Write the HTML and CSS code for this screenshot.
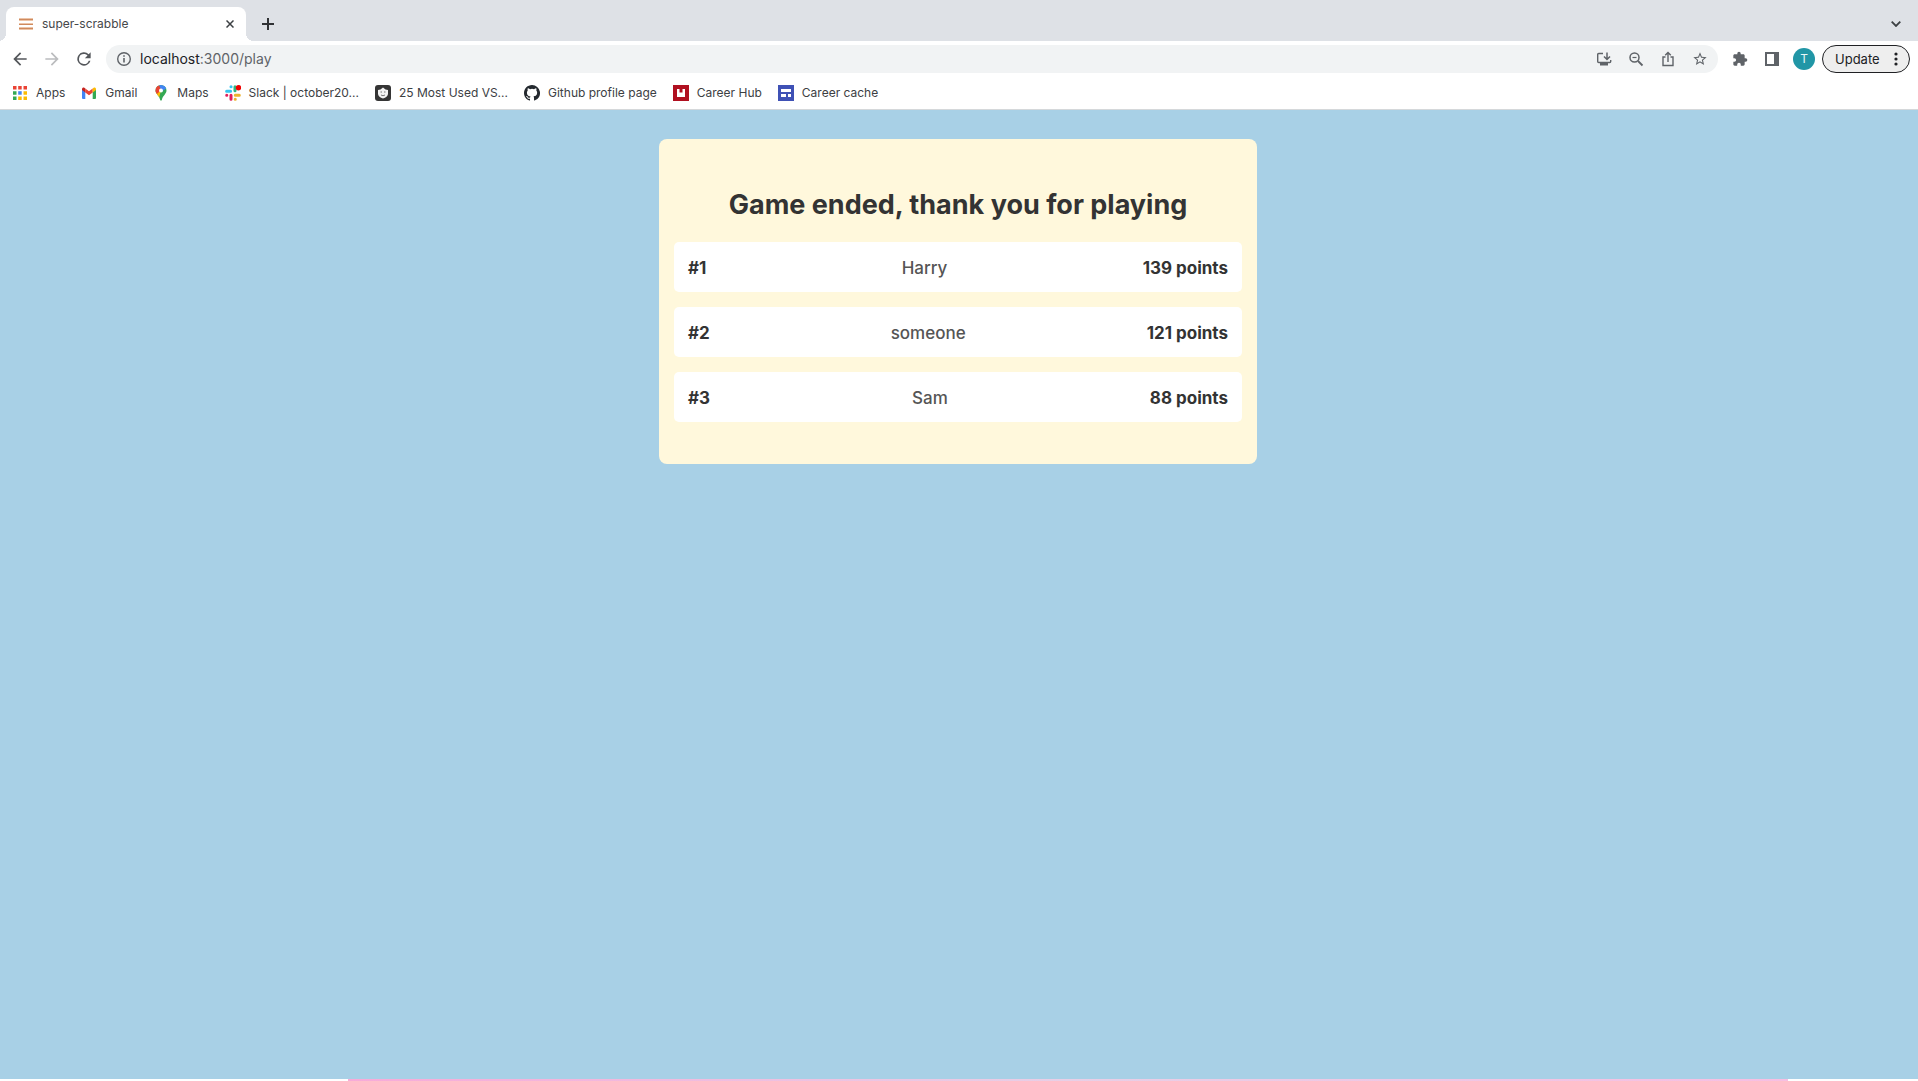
FILE: index.html
```html
<!DOCTYPE html>
<html lang="en">
<head>
<meta charset="utf-8">
<title>super-scrabble</title>
<link rel="stylesheet" href="styles.css">
</head>
<body>
<div class="browser">
  <header class="chrome">
    <div class="tabstrip">
      <div class="tab">
        <svg class="favicon" viewBox="0 0 14 14"><path fill="#ecc4a8" d="M0 1h14v3H0zM0 6h14v2H0zM0 10h14v3H0z"/><path stroke="#cf8a5e" d="M0 2.500h14M0 7.500h14M0 11.500h14"/></svg>
        <span class="tab-title">super-scrabble</span>
        <button class="icon-btn close" aria-label="Close tab"><svg width="8" height="8" viewBox="0 0 8 8"><path d="M.5.5l7 7m0-7l-7 7" stroke="#3c4043" stroke-width="1.500"/></svg></button>
      </div>
      <button class="icon-btn new-tab" aria-label="New tab"><svg width="12" height="12" viewBox="0 0 12 12"><path d="M6 0v12M0 6h12" stroke="#303235" stroke-width="2"/></svg></button>
      <button class="icon-btn tab-search" aria-label="Search tabs"><svg width="10" height="6" viewBox="0 0 10 6"><path d="M.7.7L5 5 9.300.7" fill="none" stroke="#3c4043" stroke-width="1.800"/></svg></button>
    </div>
    <div class="toolbar">
      <nav class="nav">
        <button class="icon-btn" aria-label="Back"><svg width="20" height="20" viewBox="0 0 24 24"><path fill="#54575b" d="M20 11H7.830l5.590-5.590L12 4l-8 8 8 8 1.410-1.410L7.830 13H20z"/></svg></button>
        <button class="icon-btn" aria-label="Forward"><svg width="20" height="20" viewBox="0 0 24 24"><path fill="#bbbcbe" d="M4 11h12.170l-5.590-5.590L12 4l8 8-8 8-1.410-1.410L16.170 13H4z"/></svg></button>
        <button class="icon-btn" aria-label="Reload"><svg width="20" height="20" viewBox="0 0 24 24"><path fill="#54575b" d="M17.650 6.350A8 8 0 1 0 19.730 14h-2.080A6 6 0 1 1 12 6c1.660 0 3.140.69 4.220 1.780L13 11h7V4z"/></svg></button>
      </nav>
      <div class="omnibox">
        <svg width="16" height="16" viewBox="0 0 16 16"><circle cx="8" cy="8" r="6.300" fill="none" stroke="#5f6368" stroke-width="1.400"/><path d="M8 7v4.500M8 4.300v1.500" stroke="#5f6368" stroke-width="1.600"/></svg>
        <div class="url"><span class="host">localhost</span>:3000/play</div>
        <div class="actions">
          <button class="icon-btn" aria-label="Install app"><svg width="16" height="16" viewBox="0 0 16 16"><path d="M7 2.500H2.700Q1.700 2.500 1.700 3.500v7q0 1 1 1h11q1 0 1-1V9" fill="none" stroke="#5f6368" stroke-width="1.400"/><path d="M4 12h8v2.500H4z" fill="#5f6368"/><path d="M11 1.500V8M8 5.500l3 3 3-3" fill="none" stroke="#5f6368" stroke-width="1.500"/></svg></button>
          <button class="icon-btn" aria-label="Zoom"><svg width="16" height="16" viewBox="0 0 16 16" fill="none" stroke="#5f6368"><circle cx="6.500" cy="6.500" r="4.500" stroke-width="1.500"/><path d="M10 10l4.500 4.500" stroke-width="1.800"/><path d="M4.500 6.500h4" stroke-width="1.200"/></svg></button>
          <button class="icon-btn" aria-label="Share"><svg width="16" height="16" viewBox="0 0 16 16" fill="none" stroke="#5f6368" stroke-width="1.400"><path d="M5.500 6H3v8.500h10V6h-2.500M8 11V1.800M5.200 4.300L8 1.500l2.800 2.800"/></svg></button>
          <button class="icon-btn" aria-label="Bookmark this tab"><svg width="16" height="16" viewBox="0 0 24 24"><path fill="#5f6368" d="M22 9.240l-7.190-.62L12 2 9.190 8.630 2 9.240l5.460 4.730L5.820 21 12 17.270 18.180 21l-1.630-7.030zM12 15.400l-3.760 2.270 1-4.280-3.320-2.880 4.380-.38L12 6.100l1.710 4.040 4.380.38-3.320 2.880 1 4.280z"/></svg></button>
        </div>
      </div>
      <div class="tools">
        <button class="icon-btn" aria-label="Extensions"><svg width="16" height="16" viewBox="0 0 24 24"><path fill="#5f6368" d="M20.500 11H19V7c0-1.100-.9-2-2-2h-4V3.500a2.500 2.500 0 0 0-5 0V5H4c-1.100 0-2 .9-2 2v3.800h1.500a2.700 2.700 0 0 1 0 5.400H2V20c0 1.100.9 2 2 2h3.800v-1.500a2.700 2.700 0 0 1 5.400 0V22H17c1.100 0 2-.9 2-2v-4h1.500a2.500 2.500 0 0 0 0-5z"/></svg></button>
        <button class="icon-btn" aria-label="Side panel"><svg width="14" height="14" viewBox="0 0 14 14"><path fill="#5f6368" fill-rule="evenodd" d="M0 0h14v14H0zM2 2v10h7V2z"/></svg></button>
        <button class="avatar" aria-label="Profile">T</button>
      </div>
      <button class="update">Update<svg width="4" height="14" viewBox="0 0 4 14" fill="#202124"><circle cx="2" cy="2" r="1.600"/><circle cx="2" cy="7" r="1.600"/><circle cx="2" cy="12" r="1.600"/></svg></button>
    </div>
    <nav class="bookmarks" aria-label="Bookmarks">
      <a href="#"><svg width="16" height="16" viewBox="0 0 16 16"><path fill="#ea4335" d="M1 1h3.500v3.500H1zM6.200 1h3.500v3.500H6.200zM11.500 1H15v3.500h-3.500z"/><path fill="#34a853" d="M1 6.200h3.500v3.500H1zM1 11.500h3.500V15H1z"/><path fill="#4285f4" d="M6.200 6.200h3.500v3.500H6.200z"/><path fill="#fbbc04" d="M11.500 6.200H15v3.500h-3.500zM6.200 11.500h3.500V15H6.200zM11.500 11.500H15V15h-3.500z"/></svg>Apps</a>
      <a href="#"><svg width="16" height="16" viewBox="0 0 16 16"><path fill="#4285f4" d="M1 4l3.300 2.500V14H2q-1 0-1-1z"/><path fill="#34a853" d="M15 4l-3.300 2.500V14H14q1 0 1-1z"/><path fill="#ea4335" d="M4.300 3.500L8 6.300l3.700-2.800v4L8 10.300 4.300 7.500z"/><path fill="#c5221f" d="M1 4.200Q1 2 3 2.600l1.300.9v4L1 5z"/><path fill="#fbbc04" d="M15 4.200Q15 2 13 2.600l-1.300.9v4L15 5z"/></svg>Gmail</a>
      <a href="#"><svg width="16" height="16" viewBox="0 0 16 16"><clipPath id="pin"><path d="M8 0a5.500 5.500 0 0 1 5.500 5.500C13.500 9 9.700 10.500 8.800 15q-.8 1.300-1.600 0C6.300 10.500 2.500 9 2.500 5.500A5.500 5.500 0 0 1 8 0z"/></clipPath><g clip-path="url(#pin)"><path fill="#34a853" d="M0 0h16v16H0z"/><path fill="#fbbc04" d="M2 7L8 5.500 6 13z"/><path fill="#4285f4" d="M6 0h8v3L8 7z"/><path fill="#ea4335" d="M0 0h6l2 5-4 4-3-2z"/></g><circle cx="8" cy="5.500" r="2" fill="#fff"/></svg>Maps</a>
      <a href="#"><svg width="16" height="16" viewBox="0 0 16 16" stroke-width="3" stroke-linecap="round"><path stroke="#36c5f0" d="M1.600 6.200h4M6 1.700h.1"/><path stroke="#2eb67d" d="M10 1.700v4"/><path stroke="#ecb22e" d="M10.300 10.300h4M10.200 14.300h.1"/><path stroke="#e01e5a" d="M6 10.300v4M1.700 10.300h.1"/><circle cx="13.500" cy="2.700" r="2.700" fill="#f00000" stroke="none"/></svg>Slack | october20...</a>
      <a href="#"><svg width="16" height="16" viewBox="0 0 16 16"><rect width="16" height="16" rx="3" fill="#353535"/><path fill="#f4f4f4" d="M3 5l2.500-.5L8 2.500l2.500 2L13 5v4q-.5 3-5 4.500Q3.500 12 3 9z"/><path d="M5.500 7h1.500M9 7h1.500M6 10q2 1.500 4 0" fill="none" stroke="#777"/></svg>25 Most Used VS...</a>
      <a href="#"><svg width="16" height="16" viewBox="0 0 16 16"><path fill="#24292f" d="M8 0C3.580 0 0 3.580 0 8c0 3.540 2.290 6.530 5.470 7.590.4.07.55-.17.55-.38v-1.490c-2.010.37-2.530-.49-2.690-.94-.09-.23-.48-.94-.82-1.130-.28-.15-.68-.52-.01-.53.63-.01 1.080.58 1.230.82.72 1.210 1.870.87 2.330.66.07-.52.28-.87.51-1.070-1.780-.2-3.640-.89-3.640-3.950 0-.87.31-1.590.82-2.150-.08-.2-.36-1.020.08-2.120 0 0 .67-.21 2.200.82a7.600 7.600 0 0 1 4 0c1.530-1.040 2.200-.82 2.200-.82.44 1.100.16 1.920.08 2.120.51.560.82 1.270.82 2.150 0 3.070-1.870 3.750-3.650 3.950.29.25.54.730.54 1.480v2.200c0 .21.150.46.55.38A8 8 0 0 0 8 0z"/></svg>Github profile page</a>
      <a href="#"><svg width="16" height="16" viewBox="0 0 16 16"><path fill="#b01020" d="M0 0h16v16H0z"/><path fill="#fff" d="M4 4h2.500v3.500h3V4H12v8H4z"/></svg>Career Hub</a>
      <a href="#"><svg width="16" height="16" viewBox="0 0 16 16"><path fill="#3f51b5" d="M0 0h16v16H0z"/><path fill="#fff" d="M3 4h10v3H3zM3 9h5v3H3zM10 9h3v3h-3z"/></svg>Career cache</a>
    </nav>
  </header>
  <main class="page">
    <section class="card">
      <h1>Game ended, thank you for playing</h1>
      <ol class="scores">
        <li><strong>#1</strong><span>Harry</span><strong>139 points</strong></li>
        <li><strong>#2</strong><span>someone</span><strong>121 points</strong></li>
        <li><strong>#3</strong><span>Sam</span><strong>88 points</strong></li>
      </ol>
    </section>
  </main>
  <div class="edge"><div class="edge-strip"></div></div>
</div>
</body>
</html>
```
FILE: styles.css
```css
* { box-sizing: border-box; }
body { margin: 0; font-family: Inter, "Liberation Sans", sans-serif; color: #333; }
button { font: inherit; border: 0; padding: 0; background: none; }
svg { display: block; flex: none; }
.browser { min-height: 100vh; display: flex; flex-direction: column; }
.chrome { background: #fff; border-bottom: 1px solid #d5d8da; }
.tabstrip { height: 41px; padding: 7px 10px 0 6px; background: #dee1e6; display: flex; }
.tab { position: relative; width: 240px; height: 34px; padding: 0 8px 0 13px; background: #fff; border-radius: 8px 8px 0 0; display: flex; align-items: center; gap: 9px; }
.tab::before, .tab::after { content: ""; position: absolute; bottom: 0; width: 8px; height: 8px; }
.tab::before { right: 100%; background: radial-gradient(circle at 0 0, transparent 8px, #fff 8px); }
.tab::after { left: 100%; background: radial-gradient(circle at 100% 0, transparent 8px, #fff 8px); }
.favicon { width: 14px; height: 14px; }
.tab-title { flex: 1; font-size: 12px; line-height: 16px; color: #45474a; }
.icon-btn { width: 24px; height: 24px; display: grid; place-items: center; flex: none; }
.close { width: 16px; height: 16px; }
.new-tab { margin: 5px 0 0 10px; }
.tab-search { margin: 5px 0 0 auto; }
.toolbar { height: 36px; padding: 0 8px; display: flex; align-items: center; }
.nav { display: flex; gap: 8px; margin-right: 10px; }
.omnibox { flex: 1; height: 28px; padding: 0 6px 0 10px; background: #f1f3f4; border-radius: 14px; display: flex; align-items: center; }
.url { flex: 1; margin-left: 8px; font-size: 14px; line-height: 20px; color: #5f6368; }
.host { color: #202124; }
.actions { display: flex; gap: 8px; }
.tools { display: flex; align-items: center; gap: 8px; margin: 0 6px 0 10px; }
.avatar { width: 22px; height: 22px; margin: 0 1px; border-radius: 50%; background: #2196a6; color: #e8f6f7; font-size: 12px; line-height: 22px; }
.update { width: 88px; height: 28px; padding: 0 11px 0 12px; border: 1px solid #202124; border-radius: 14px; background: #eee; color: #202124; font-size: 13px; display: flex; align-items: center; justify-content: space-between; }
.bookmarks { height: 32px; padding: 0 12px; display: flex; align-items: center; gap: 16px; }
.bookmarks a { display: flex; align-items: center; gap: 8px; color: #3c4043; text-decoration: none; font-size: 12px; line-height: 16px; white-space: nowrap; }
.page { flex: 1; padding: 29px 22px 29px 20px; background: #a8d0e6; }
.card { max-width: 598px; margin: 0 auto; padding: 46px 15px 42px; border-radius: 8px; background: #fff8dc; }
h1 { margin: 0 0 17px; text-align: center; font-size: 27px; line-height: 40px; font-weight: 700; }
.scores { margin: 0; padding: 0; list-style: none; display: grid; gap: 15px; }
.scores li { display: flex; justify-content: space-between; padding: 15px 14px 12px; border-radius: 5px; background: #fff; font-size: 17px; line-height: 23px; }
.scores strong { font-weight: 700; }
.scores span { color: #555; font-weight: 500; }
.edge { height: 2px; padding: 0 130px 0 348px; background: #fff; }
.edge-strip { height: 2px; background: linear-gradient(90deg, #f7abd8, #e8cfe6 50%, #f7bfe2); }
```
